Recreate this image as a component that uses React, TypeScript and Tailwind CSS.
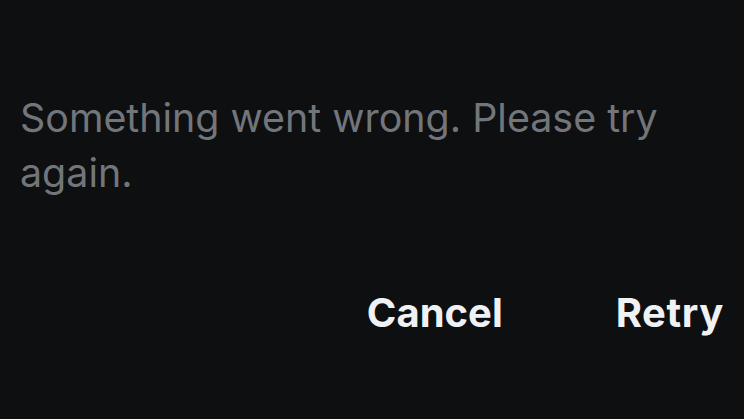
export default function App() {
  return (
    <div
      className="w-[744px] h-[419px] bg-[#0e0f11] flex flex-col"
      style={{ fontFamily: "Inter, 'Noto Sans', sans-serif" }}
    >
      <p className="pt-[91px] pl-[20px] pr-[20px] text-[39.4px] leading-[55px] text-[#72767b]">
        Something went wrong. Please try again.
      </p>
      <div className="mt-auto mb-[82px] flex justify-end items-center gap-[113px] pr-[20px]">
        <button className="text-[40px] font-bold text-[#eff1f3] leading-[48px]">
          Cancel
        </button>
        <button className="text-[40px] font-bold text-[#eff1f3] leading-[48px] tracking-[0.6px]">
          Retry
        </button>
      </div>
    </div>
  );
}
